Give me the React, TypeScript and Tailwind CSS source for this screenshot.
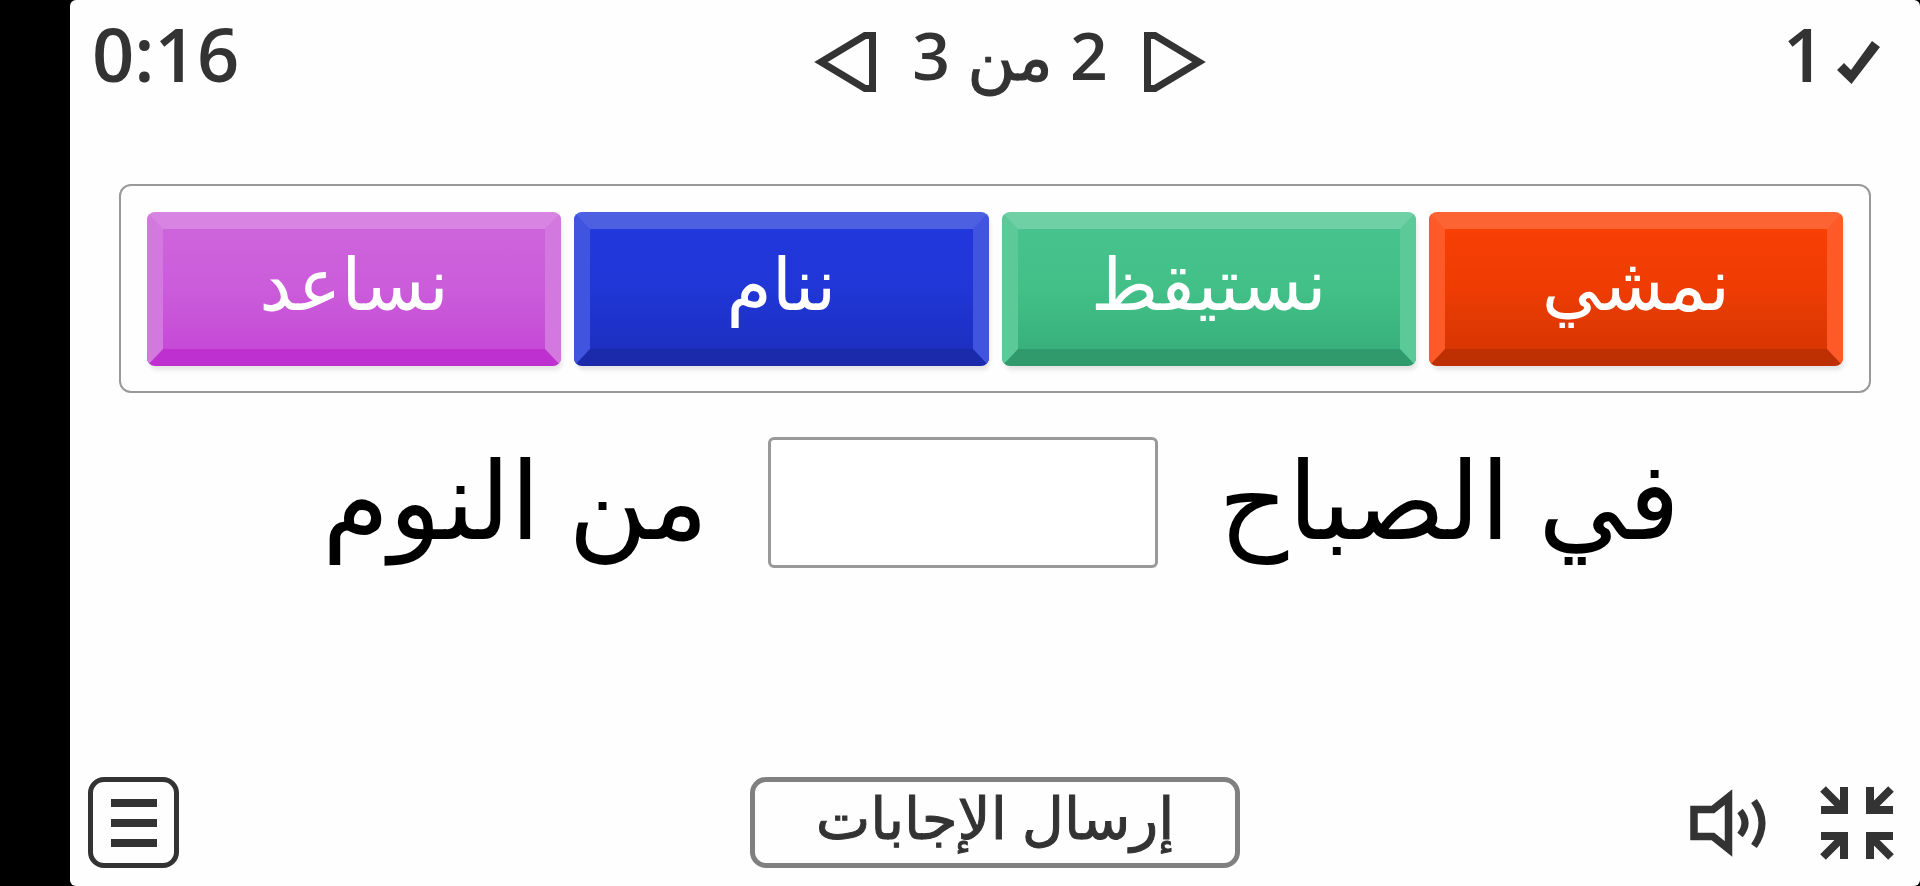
import React, { useState } from "react";

type Tile = { word: string; face: string };

const tiles: Tile[] = [
  {
    word: "نمشي",
    face: "from-[#fb4004] via-[#ee3c04] to-[#d23502] border-t-[#fd6434] border-x-[#fd5a28] border-b-[#be3002]",
  },
  {
    word: "نستيقظ",
    face: "from-[#48c48e] via-[#42c088] to-[#36ac78] border-t-[#6ed0a4] border-x-[#5cca98] border-b-[#309a6c]",
  },
  {
    word: "ننام",
    face: "from-[#2238de] via-[#2036d6] to-[#1c2ebc] border-t-[#4e60e2] border-x-[#4054e0] border-b-[#1a2aaa]",
  },
  {
    word: "نساعد",
    face: "from-[#ce66dc] via-[#cb5cda] to-[#c444d6] border-t-[#d884e2] border-x-[#d278de] border-b-[#be30d0]",
  },
];

function Header({ page, total, onPage }: { page: number; total: number; onPage: (n: number) => void }) {
  return (
    <header className="flex items-start justify-between pl-[22px] pr-10 pt-1 text-[#333]">
      <time className="w-[272px] text-[74px] leading-[100px] font-semibold">0:16</time>
      <nav dir="rtl" className="flex items-center gap-9" aria-label="الصفحات">
        <button type="button" aria-label="السابق" className="pt-4" onClick={() => onPage(Math.max(1, page - 1))}>
          <svg width="62" height="60" viewBox="0 0 62 60" fill="none" stroke="currentColor" strokeWidth="7">
            <path d="M3.5 3.5H11L55 30L11 56.500H3.500Z" />
          </svg>
        </button>
        <span className="text-[66px] leading-[100px] font-semibold">
          {page} <span className="font-normal [-webkit-text-stroke:1px_#333]">من</span> {total}
        </span>
        <button type="button" aria-label="التالي" className="pt-4" onClick={() => onPage(Math.min(total, page + 1))}>
          <svg width="62" height="60" viewBox="0 0 62 60" fill="none" stroke="currentColor" strokeWidth="7">
            <path d="M58.500 3.500H51L7 30L51 56.500H58.500Z" />
          </svg>
        </button>
      </nav>
      <div className="flex w-56 items-center justify-end gap-3">
        <span className="text-[74px] leading-[100px] font-semibold">1</span>
        <svg className="mt-4" width="43" height="43" viewBox="0 0 43 43" fill="currentColor" aria-hidden="true">
          <path d="M0 29L7 22L14 29L35 0L43 6L14.500 43Z" />
        </svg>
      </div>
    </header>
  );
}

export default function App() {
  const [page, setPage] = useState(2);
  const [answer, setAnswer] = useState("");

  return (
    <div className="min-h-screen bg-black pl-[70px] font-['Open_Sans','DejaVu_Sans',sans-serif]">
      <div className="flex min-h-screen flex-col rounded-md bg-[#fefefe]">
        <Header page={page} total={3} onPage={setPage} />

        <main className="flex-1 px-[49px] pt-20">
          <div dir="rtl" className="grid grid-cols-4 gap-[13px] rounded-xl border-2 border-[#999] px-[26px] pt-[26px] pb-[25px]">
            {tiles.map((t) => (
              <button
                key={t.word}
                type="button"
                onClick={() => setAnswer(t.word)}
                className={`h-[154px] rounded-lg border-x-[16px] border-y-[17px] bg-linear-to-b bg-origin-border pb-4 text-[73px] leading-none text-white shadow-[2px_5px_4px_-1px_rgba(0,0,0,0.1)] ${t.face}`}
              >
                {t.word}
              </button>
            ))}
          </div>

          <p dir="rtl" className="flex items-center justify-center gap-[60px] pt-[43px] pl-3 text-[108px] leading-[124px] text-black">
            <span className="pb-2">في الصباح</span>
            <input
              aria-label="الكلمة الناقصة"
              value={answer}
              readOnly
              className="h-[131px] w-[390px] rounded-md border-[3px] border-[#999] bg-white text-center text-[73px]"
            />
            <span className="pb-2">من النوم</span>
          </p>
        </main>

        <footer className="grid grid-cols-[1fr_auto_1fr] items-center px-[18px] pb-[18px] text-[#333]">
          <button
            type="button"
            aria-label="القائمة"
            className="flex size-[91px] flex-col items-center justify-center gap-3 rounded-2xl border-[5px] border-[#333]"
          >
            <span className="h-2 w-[46px] bg-[#333]" />
            <span className="h-2 w-[46px] bg-[#333]" />
            <span className="h-2 w-[46px] bg-[#333]" />
          </button>
          <button
            type="button"
            dir="rtl"
            className="h-[91px] w-[490px] rounded-2xl border-[5px] border-[#808080] pb-3 text-[58px] leading-none [-webkit-text-stroke:1px_#333]"
          >
            إرسال الإجابات
          </button>
          <div className="flex items-center justify-end gap-[52px] pr-2">
            <button type="button" aria-label="الصوت">
              <svg width="78" height="68" viewBox="0 0 78 68" fill="none" stroke="currentColor">
                <path strokeWidth="7.500" d="M4 20.500H23L38.500 8V60L23 47.500H4Z" />
                <path strokeWidth="7" d="M50 22Q60 34 50 46M64 12Q80 34 64 57" />
              </svg>
            </button>
            <button type="button" aria-label="إنهاء ملء الشاشة">
              <svg width="74" height="74" viewBox="0 0 74 74" fill="none" stroke="currentColor" strokeWidth="8">
                <path d="M24 1V24H1M3 3L24 24M50 1V24H73M71 3L50 24M24 73V50H1M3 71L24 50M50 73V50H73M71 71L50 50" />
              </svg>
            </button>
          </div>
        </footer>
      </div>
    </div>
  );
}
